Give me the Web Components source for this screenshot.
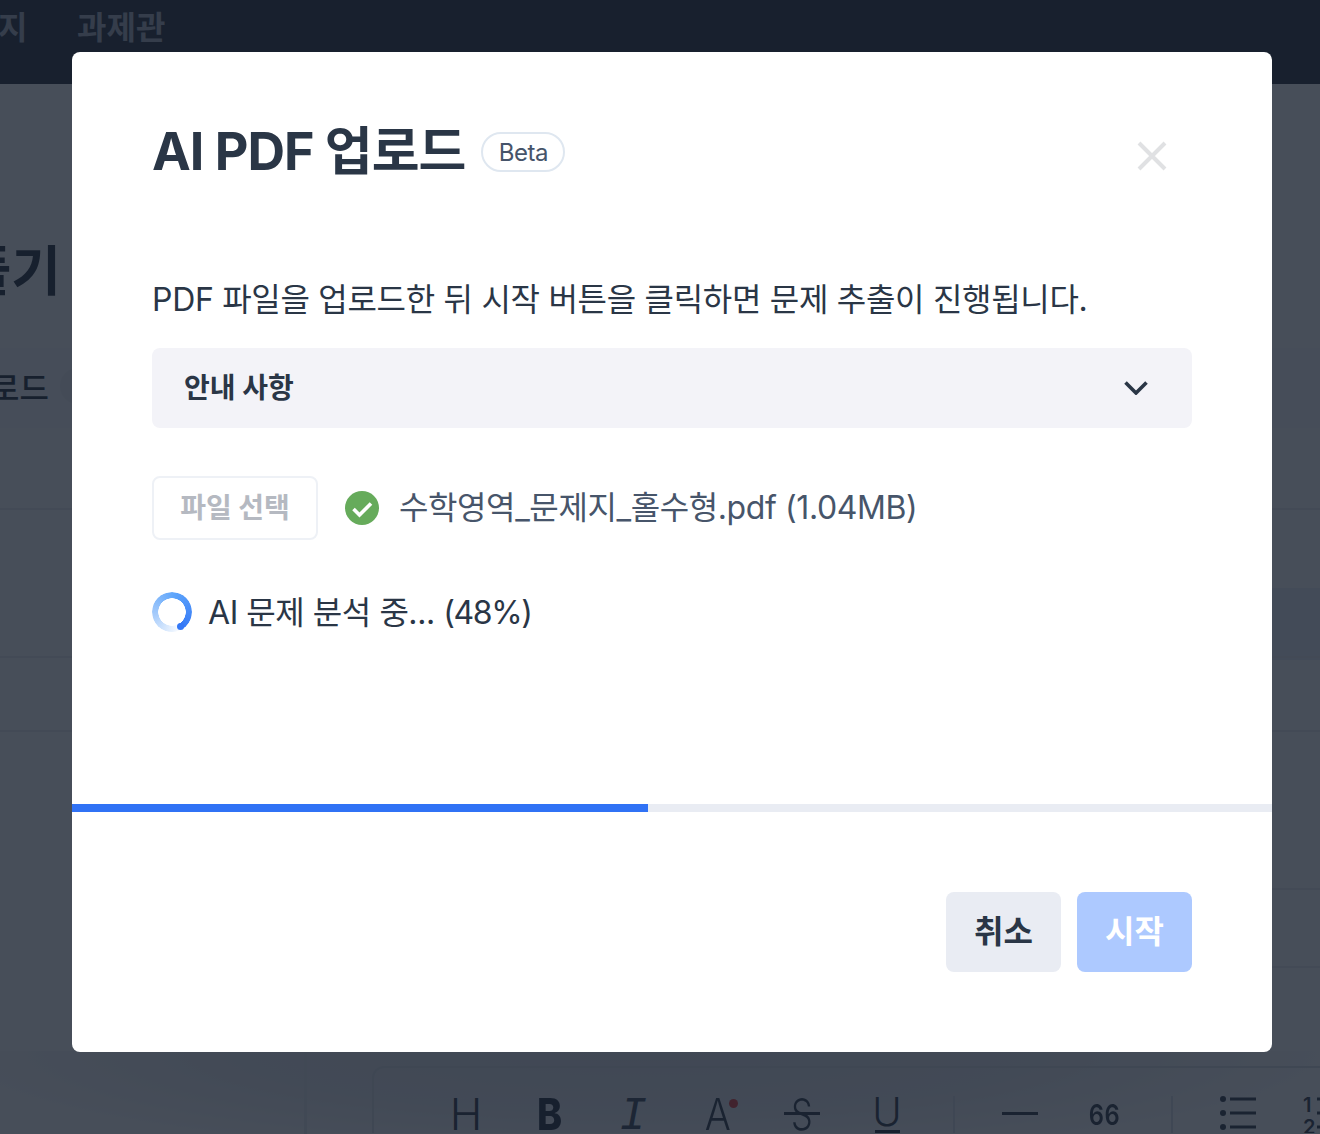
<!DOCTYPE html>
<html lang="ko"><head><meta charset="utf-8"><title>AI PDF 업로드</title>
<style>
html,body{margin:0;padding:0;background:#fff}
body{font-family:Inter,"Noto Sans CJK KR","Noto Sans",sans-serif;width:1320px;height:1134px;overflow:hidden;position:relative}
</style></head><body>
<app-page></app-page>
<modal-overlay>
  <upload-modal>
    <modal-title slot="head">AI PDF 업로드</modal-title>
    <p-text slot="body">PDF 파일을 업로드한 뒤 시작 버튼을 클릭하면 문제 추출이 진행됩니다.</p-text>
    <info-box slot="body">안내 사항</info-box>
    <file-row slot="body" name="수학영역_문제지_홀수형.pdf (1.04MB)"></file-row>
    <status-row slot="body">AI 문제 분석 중... <span style="letter-spacing:-1.4px">(48%)</span></status-row>
  </upload-modal>
</modal-overlay>
<script>
function def(name,html,init){
  customElements.define(name,class extends HTMLElement{
    constructor(){super();this.attachShadow({mode:'open'}).innerHTML=html;}
    connectedCallback(){if(init)init(this);}
  });
}
def('app-header',`<style>
:host{display:flex;height:84px;background:#141d2b;align-items:flex-start;padding-top:12px;box-sizing:border-box;overflow:hidden;font:700 32px/32px Inter,"Noto Sans CJK KR",sans-serif;color:#a3abb8}
span{display:block}
.a{width:77px;text-indent:-2px}
</style><span class="a">지</span><span>과제관</span>`);
def('editor-toolbar',`<style>
:host{display:block;height:67px;flex:1;overflow:hidden;border:solid #d5d9e0;border-width:2px 0 0 2px;border-radius:12px 0 0 0;box-sizing:border-box;margin-left:65px;font-family:Inter,"Noto Sans CJK KR",sans-serif;color:#1f2a3a}
.r{display:flex;align-items:flex-start;height:65px;padding-top:24px;box-sizing:border-box;white-space:nowrap;position:relative}
i{font-style:normal;display:block;font-size:44px;line-height:44px;text-align:center;flex:none;width:60px;font-weight:300;position:relative}
i b{display:inline-block;font-weight:inherit}
.h{margin-left:62px}
.bd{margin-left:24px;font-weight:800;color:#131c2b}
.bd b{transform:scaleX(.86)}
.it{margin-left:23px;font-family:"Liberation Mono",monospace;font-style:italic;font-weight:400;font-size:46px;color:#2f3a4a}
.it b{transform:translateY(3px)}
.ac{margin-left:25px}
.ac b{transform:scaleX(.88)}
.ac u{position:absolute;width:9px;height:9px;border-radius:50%;background:#e02a2a;left:41px;top:7px}
.s{margin-left:24px}
.s b{transform:scaleX(.78)}
.s u{position:absolute;left:12px;width:36px;top:20px;height:3px;background:#1f2a3a}
.u{margin-left:25px;font-size:40px}
.u b{transform:translateY(-2px)}
.u u{position:absolute;left:18px;width:25px;top:38px;height:4px;background:#131c2b}
.sep{width:2px;height:60px;background:#d8dce3;margin-top:4px;flex:none}
.sp1{margin-left:36px}
.dash{margin-left:47px;width:36px;height:3px;background:#1f2a3a;margin-top:20px;flex:none}
.q{margin-left:36px;font-size:28px;font-weight:600;letter-spacing:.5px;line-height:46px}
.q b{transform:scaleX(.85)}
.sp2{margin-left:37px}
.ul{margin-left:47px;width:36px;height:36px;display:block;margin-top:3px;flex:none}
.ol{margin-left:47px;font-size:20px;line-height:22px;font-weight:600;margin-top:2px;width:14px;text-align:left}
.oll{width:8px;height:36px;display:block;margin-top:3px;flex:none}
</style><div class="r">
<i class="h"><b>H</b></i><i class="bd"><b>B</b></i><i class="it"><b>I</b></i><i class="ac"><b>A</b><u></u></i><i class="s"><b>S</b><u></u></i><i class="u"><b>U</b><u></u></i>
<div class="sep sp1"></div><div class="dash"></div><i class="q"><b>66</b></i><div class="sep sp2"></div>
<svg class="ul" viewBox="0 0 36 36" fill="#1f2a3a" stroke="none"><path d="M10 2.5h26v3H10zM10 16.5h26v3H10zM10 30.5h26v3H10z"/><circle cx="3" cy="4" r="3"/><circle cx="3" cy="18" r="3"/><circle cx="3" cy="32" r="3"/></svg>
<i class="ol">1<br>2</i>
<svg class="oll" viewBox="0 0 8 36" fill="#1f2a3a"><path d="M0 2.5h8v3H0zM0 16.5h8v3H0zM0 30.5h8v3H0z"/></svg>
</div>`);
def('app-page',`<style>
:host{display:block;height:1134px;overflow:hidden;background:#fff;font-family:Inter,"Noto Sans CJK KR",sans-serif}
.title{height:118px;margin-top:144px;font:700 54px/88px Inter,"Noto Sans CJK KR",sans-serif;color:#111a28;display:flex;margin-left:-88px;white-space:nowrap}
.tabs{height:80px;margin-top:2px;background:#f9f9fc;display:flex;align-items:center;font-size:32px;color:#111a28;padding-bottom:4px;box-sizing:border-box}
.tabs b{font-weight:500;display:block;text-indent:-10px}
.pill{width:40px;height:36px;border-radius:20px;background:#edf0f5;margin-left:11px}
.line{height:2px;background:#e9ebef}
.l1{margin-top:80px}
.band{height:72px;margin-top:78px;background:#e9edf7;margin-left:1200px}
.l2{margin-top:-4px}
.l3{margin-top:72px}
.l4{margin-top:156px;margin-left:1200px}
.l5{margin-top:76px;margin-left:1200px}
.lower{height:82px;margin-top:83px;display:flex;padding-top:15px;box-sizing:border-box;background:radial-gradient(ellipse 720px 110px at 640px 0,#dcdfe6 0%,#e6e8ee 55%,#fff 100%)}
.side{width:3px;height:100px;margin:-15px 0 0 304px;background:#e0e3e9;flex:none}
</style><app-header></app-header>
<div class="title">출풀기</div>
<div class="tabs"><b>로드</b><span class="pill"></span></div>
<div class="line l1"></div>
<div class="band"></div>
<div class="line l2"></div>
<div class="line l3"></div>
<div class="line l4"></div>
<div class="line l5"></div>
<div class="lower"><div class="side"></div><editor-toolbar></editor-toolbar></div>`);
def('modal-overlay',`<style>
:host{position:absolute;inset:0;display:flex;justify-content:flex-start;padding:52px 0 0 72px;box-sizing:border-box;background:rgba(25,34,48,.8)}
</style><slot></slot>`);
def('upload-modal',`<style>
:host{display:flex;flex-direction:column;width:1200px;height:1000px;background:#fff;border-radius:8px;box-sizing:border-box;color:#2a3646;font-family:Inter,"Noto Sans CJK KR",sans-serif;overflow:hidden;flex:none}
.head{display:flex;align-items:center;justify-content:space-between;padding:72px 80px 0 80px;height:56px;flex:none}
.x{width:44px;height:44px;margin:8px 0 0 0;transform:translateX(-18px)}
.body{display:flex;flex-direction:column;padding:96px 80px 0;height:624px;box-sizing:border-box;flex:none}
.foot{display:flex;justify-content:flex-end;gap:16px;padding:80px 80px 0}
</style><div class="head"><slot name="head"></slot>
<svg class="x" viewBox="0 0 44 44" fill="none" stroke="#e0e1e3" stroke-width="4"><path d="M9 9l26 26M35 9L9 35"/></svg></div>
<div class="body"><slot name="body"></slot></div>
<progress-line></progress-line>
<div class="foot"><modal-button>취소</modal-button><modal-button primary>시작</modal-button></div>`);
def('modal-title',`<style>
:host{display:flex;align-items:center;gap:16px}
h2{margin:0;font:700 52px/56px Inter,"Noto Sans CJK KR",sans-serif;letter-spacing:-1px;color:#2a3646}
.beta{width:84px;height:40px;box-sizing:border-box;border:2px solid #dfe7f0;border-radius:20px;display:flex;align-items:center;justify-content:center;padding-top:2px;font:400 24px/1 Inter,sans-serif;letter-spacing:-.5px;color:#46546a}
</style><h2><slot></slot></h2><span class="beta">Beta</span>`);
def('p-text',`<style>
:host{display:block;font-size:32px;line-height:48px;color:#2a3646;letter-spacing:-.3px;white-space:nowrap}
</style><slot></slot>`);
def('info-box',`<style>
:host{display:flex;align-items:center;justify-content:space-between;height:80px;margin-top:24px;padding:0 44px 4px 32px;box-sizing:border-box;background:#f3f3f8;border-radius:8px;font-weight:700;font-size:28px;color:#2a3646}
svg{width:24px;height:14px;position:relative;top:2px}
</style><slot></slot><svg viewBox="0 0 24 14" fill="none" stroke="#2a3646" stroke-width="3.6"><path d="M1.5 1.5L12 12L22.5 1.5"/></svg>`);
def('file-row',`<style>
:host{display:flex;align-items:center;height:64px;margin-top:48px}
.btn{width:166px;height:64px;box-sizing:border-box;border:2px solid #eef1f6;border-radius:8px;display:flex;align-items:center;justify-content:center;padding-bottom:4px;font-size:28px;font-weight:700;color:#b5b9c1}
svg{width:34px;height:34px;margin-left:27px;margin-right:20px}
.n{font-size:32px;line-height:48px;color:#47556a;white-space:nowrap;letter-spacing:-.4px;margin-top:0}
</style><span class="btn">파일 선택</span>
<svg viewBox="0 0 34 34"><circle cx="17" cy="17" r="17" fill="#66ab5b"/><path d="M8.5 18l6 6L26 12.5" fill="none" stroke="#fff" stroke-width="3.6"/></svg>
<span class="n"></span>`,el=>{el.shadowRoot.querySelector('.n').textContent=el.getAttribute('name');});
def('status-row',`<style>
:host{display:flex;align-items:center;height:40px;margin-top:52px;font-size:32px;color:#2a3646;gap:16px;white-space:nowrap}
.w{position:relative;width:40px;height:40px;flex:none}
.sp{display:block;width:40px;height:40px;border-radius:50%;background:conic-gradient(from 150deg,#fff 0%,#a9cdfb 30%,#5ea5fb 60%,#3478f6 100%);-webkit-mask:radial-gradient(circle,transparent 13.5px,#000 14px);mask:radial-gradient(circle,transparent 13.5px,#000 14px)}
.cap{position:absolute;width:7px;height:7px;border-radius:50%;background:#3478f6;left:25px;top:31px}
.t{display:block;margin-top:-5px;letter-spacing:-.45px}
</style><span class="w"><span class="sp"></span><span class="cap"></span></span><span class="t"><slot></slot></span>`);
def('progress-line',`<style>
:host{display:block;height:8px;background:#e9ecf3;flex:none}
div{width:48%;height:100%;background:#3072f5}
</style><div></div>`);
def('modal-button',`<style>
:host{display:flex;align-items:center;justify-content:center;width:115px;height:80px;border-radius:8px;background:#e9ecf3;color:#2a3646;font-weight:700;font-size:32px;padding-bottom:6px;box-sizing:border-box}
:host([primary]){background:#adc9ff;color:#fff}
</style><slot></slot>`);
</script>
</body></html>
